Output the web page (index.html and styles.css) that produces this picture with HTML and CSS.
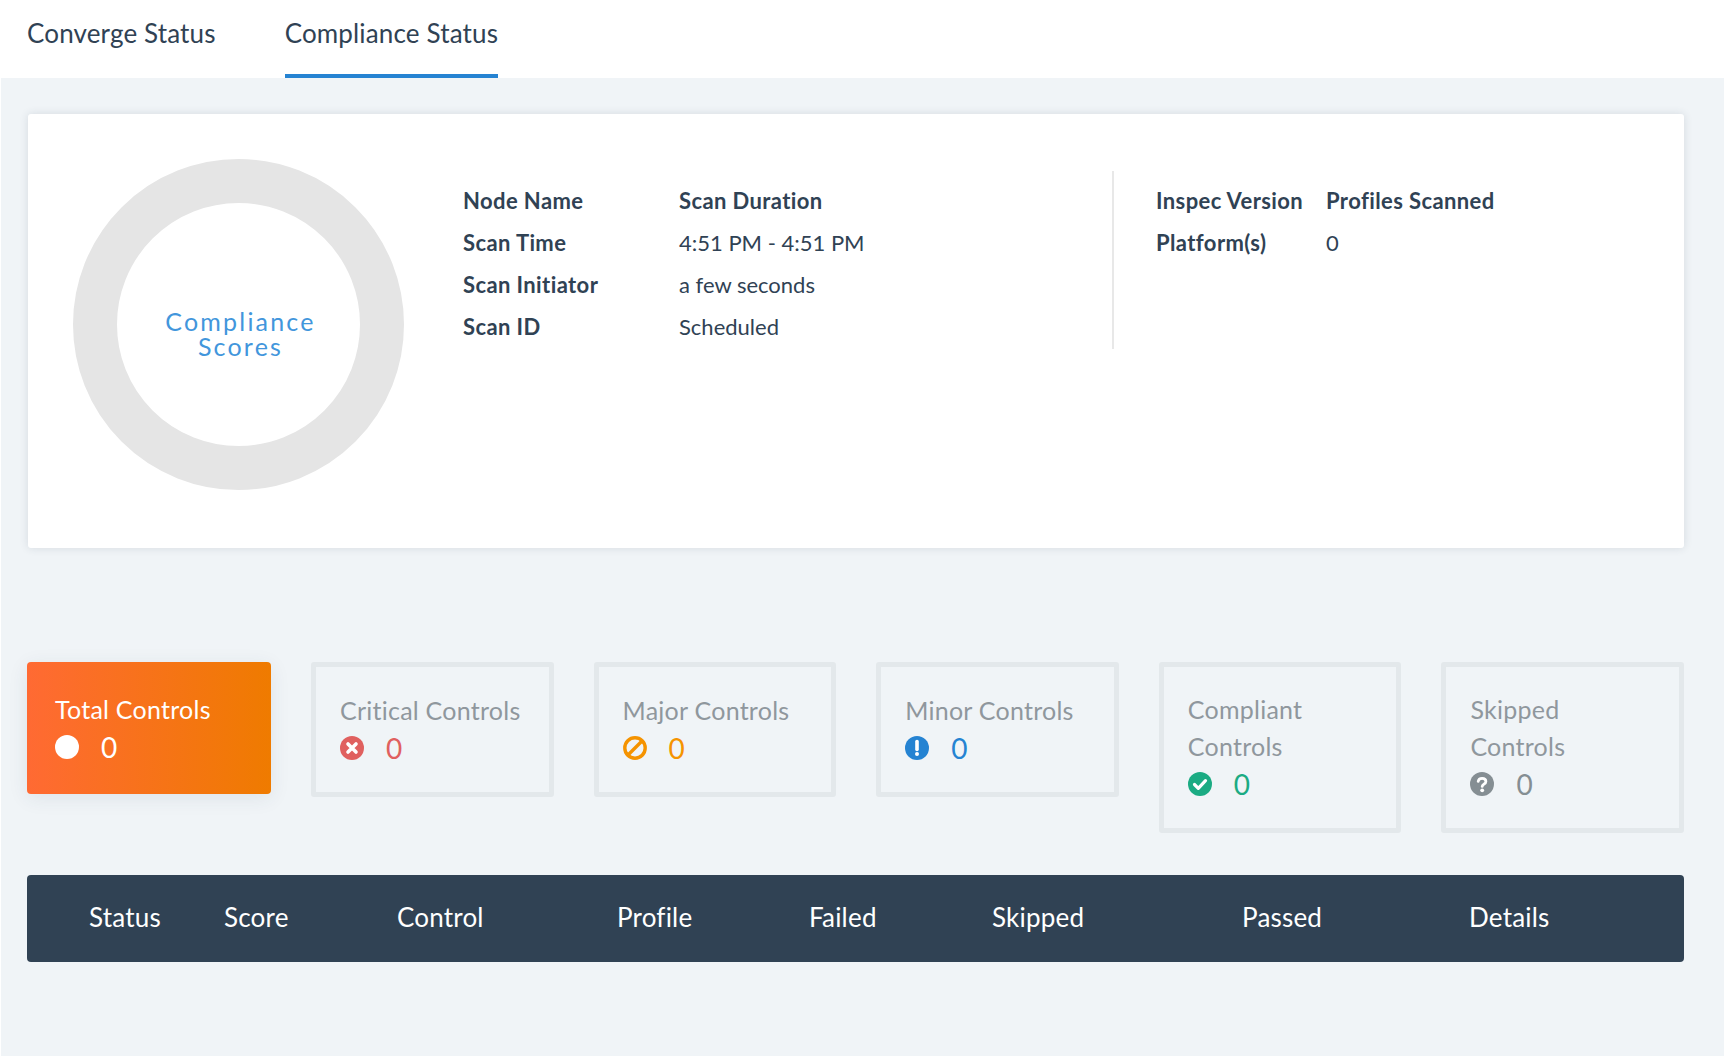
FILE: index.html
```html
<html>
<head>
<title>Compliance Status</title>
<meta http-equiv="Content-Type" content="text/html; charset=utf-8">
<link rel="stylesheet" href="styles.css">
</head>
<body>

<div class="tabs">
	<a class="tab">Converge Status</a>
	<a class="tab tab_active">Compliance Status</a>
</div>

<div class="content">

	<div class="summary">
		<div class="donut">
			<div class="donut_text">Compliance<br>Scores</div>
		</div>
		<div class="info info_left">
			<div class="label">Node Name</div><div class="label">Scan Duration</div>
			<div class="label">Scan Time</div><div>4:51 PM - 4:51 PM</div>
			<div class="label">Scan Initiator</div><div>a few seconds</div>
			<div class="label">Scan ID</div><div>Scheduled</div>
		</div>
		<div class="info info_right">
			<div class="label">Inspec Version</div><div class="label">Profiles Scanned</div>
			<div class="label">Platform(s)</div><div>0</div>
		</div>
	</div>

	<div class="stats">
		<div class="stat stat_total">
			<div class="stat_name">Total Controls</div>
			<div class="stat_value">
				<svg class="stat_icon" viewBox="0 0 24 24"><circle cx="12" cy="12" r="12" fill="#fff"/></svg>
				<span>0</span>
			</div>
		</div>
		<div class="stat stat_critical">
			<div class="stat_name">Critical Controls</div>
			<div class="stat_value">
				<svg class="stat_icon" viewBox="0 0 24 24"><circle cx="12" cy="12" r="12" fill="#e0605f"/><path d="M8 8l8 8M16 8l-8 8" stroke="#fff" stroke-width="3.6" stroke-linecap="round"/></svg>
				<span>0</span>
			</div>
		</div>
		<div class="stat stat_major">
			<div class="stat_name">Major Controls</div>
			<div class="stat_value">
				<svg class="stat_icon" viewBox="0 0 24 24"><circle cx="12" cy="12" r="10.2" fill="none" stroke="#f59300" stroke-width="3.4"/><path d="M5 19L19 5" stroke="#f59300" stroke-width="3.4"/></svg>
				<span>0</span>
			</div>
		</div>
		<div class="stat stat_minor">
			<div class="stat_name">Minor Controls</div>
			<div class="stat_value">
				<svg class="stat_icon" viewBox="0 0 24 24"><circle cx="12" cy="12" r="12" fill="#2583d2"/><path d="M12 5.5v8" stroke="#fff" stroke-width="3.6" stroke-linecap="round"/><circle cx="12" cy="18" r="2" fill="#fff"/></svg>
				<span>0</span>
			</div>
		</div>
		<div class="stat stat_wrapped stat_compliant">
			<div class="stat_name">Compliant<br>Controls</div>
			<div class="stat_value">
				<svg class="stat_icon" viewBox="0 0 24 24"><circle cx="12" cy="12" r="12" fill="#1bab83"/><path d="M6.5 12.5l3.8 3.8 7.2-7.6" fill="none" stroke="#fff" stroke-width="3.2" stroke-linecap="round" stroke-linejoin="round"/></svg>
				<span>0</span>
			</div>
		</div>
		<div class="stat stat_wrapped stat_skipped">
			<div class="stat_name">Skipped<br>Controls</div>
			<div class="stat_value">
				<svg class="stat_icon" viewBox="0 0 24 24"><circle cx="12" cy="12" r="12" fill="#858e93"/><path d="M8.2 9.4c.3-2 1.9-3.1 3.9-3.1 2.2 0 3.8 1.3 3.8 3.1 0 2.7-3.7 2.7-3.7 5" fill="none" stroke="#fff" stroke-width="2.8" stroke-linecap="round"/><circle cx="12.2" cy="18.3" r="1.9" fill="#fff"/></svg>
				<span>0</span>
			</div>
		</div>
	</div>

	<div class="table_head">
		<div>Status</div>
		<div>Score</div>
		<div>Control</div>
		<div>Profile</div>
		<div>Failed</div>
		<div>Skipped</div>
		<div>Passed</div>
		<div>Details</div>
	</div>

</div>

</body>
</html>
```
FILE: styles.css
```css
body {
	margin: 0px;
	padding: 0px;
	background: #fff;
	color: #304254;
	font-family: "Lato", "Liberation Sans", sans-serif;
}

.tabs {
	display: flex;
	gap: 69px;
	height: 78px;
	padding-left: 27px;
	box-sizing: border-box;
}
.tab {
	height: 78px;
	box-sizing: border-box;
	font-size: 26px;
	line-height: 67px;
	letter-spacing: 0.15px;
}
.tab_active {
	border-bottom: 4px solid #2583d2;
}

.content {
	margin-left: 1px;
	height: 978px;
	padding: 36px 40px 0px 26px;
	box-sizing: border-box;
	background: #f0f4f7;
}

.summary {
	display: flex;
	height: 434px;
	margin-left: 1px;
	padding: 45px 0px 0px 45px;
	box-sizing: border-box;
	background: #fff;
	border-radius: 3px;
	box-shadow: 0px 0px 8px rgba(48, 66, 84, 0.14);
}
.donut {
	display: flex;
	align-items: center;
	justify-content: center;
	flex-shrink: 0;
	width: 331px;
	height: 331px;
	box-sizing: border-box;
	border: 44px solid #e5e5e5;
	border-radius: 50%;
}
.donut_text {
	padding: 19px 0px 0px 4px;
	color: #4296dc;
	font-size: 25px;
	line-height: 25px;
	letter-spacing: 2.2px;
	text-align: center;
}

.info {
	display: grid;
	align-content: start;
	grid-auto-rows: 42px;
	font-size: 22px;
	line-height: 42px;
	margin-top: 12px;
	height: 178px;
	padding-top: 9px;
	box-sizing: border-box;
}
.info_left {
	grid-template-columns: 216px 433px;
	margin-left: 59px;
}
.info_right {
	grid-template-columns: 170px 220px;
	padding-left: 42px;
	border-left: 2px solid #e8e8e8;
}
.label {
	font-weight: 700;
	letter-spacing: 0.4px;
}

.stats {
	display: grid;
	grid-template-columns: 244px repeat(5, 1fr);
	gap: 40px;
	align-items: start;
	margin-top: 114px;
}
.stat {
	padding: 25px 22px 25.5px 24px;
	border: 5px solid #e3e8eb;
	border-radius: 3px;
	color: #8f979d;
	font-size: 25px;
}
.stat_wrapped {
	padding-top: 24px;
	padding-bottom: 26.5px;
}
.stat_total {
	padding: 29px 28px 28.5px;
	border: none;
	border-radius: 4px;
	background: linear-gradient(90deg, #ff6a33, #ef7b00);
	box-shadow: 0px 4px 20px rgba(48, 66, 84, 0.09);
	color: #fff;
}
.stat_name {
	line-height: 36.5px;
	letter-spacing: 0.25px;
}
.stat_value {
	display: flex;
	align-items: center;
	gap: 22px;
	height: 36px;
	margin-top: 1.5px;
	font-size: 28px;
}
.stat_icon {
	width: 24px;
	height: 24px;
}
.stat_critical .stat_value { color: #e0605f; }
.stat_major .stat_value { color: #f59300; }
.stat_minor .stat_value { color: #2583d2; }
.stat_compliant .stat_value { color: #1bab83; }
.stat_skipped .stat_value { color: #858e93; }

.table_head {
	display: grid;
	grid-template-columns: 135px 173px 220px 192px 183px 250px 227px 1fr;
	height: 87px;
	margin-top: 42px;
	padding-left: 62px;
	box-sizing: border-box;
	background: #304254;
	border-radius: 4px;
	color: #fff;
	font-size: 26px;
	line-height: 84px;
	letter-spacing: 0.2px;
}
```
